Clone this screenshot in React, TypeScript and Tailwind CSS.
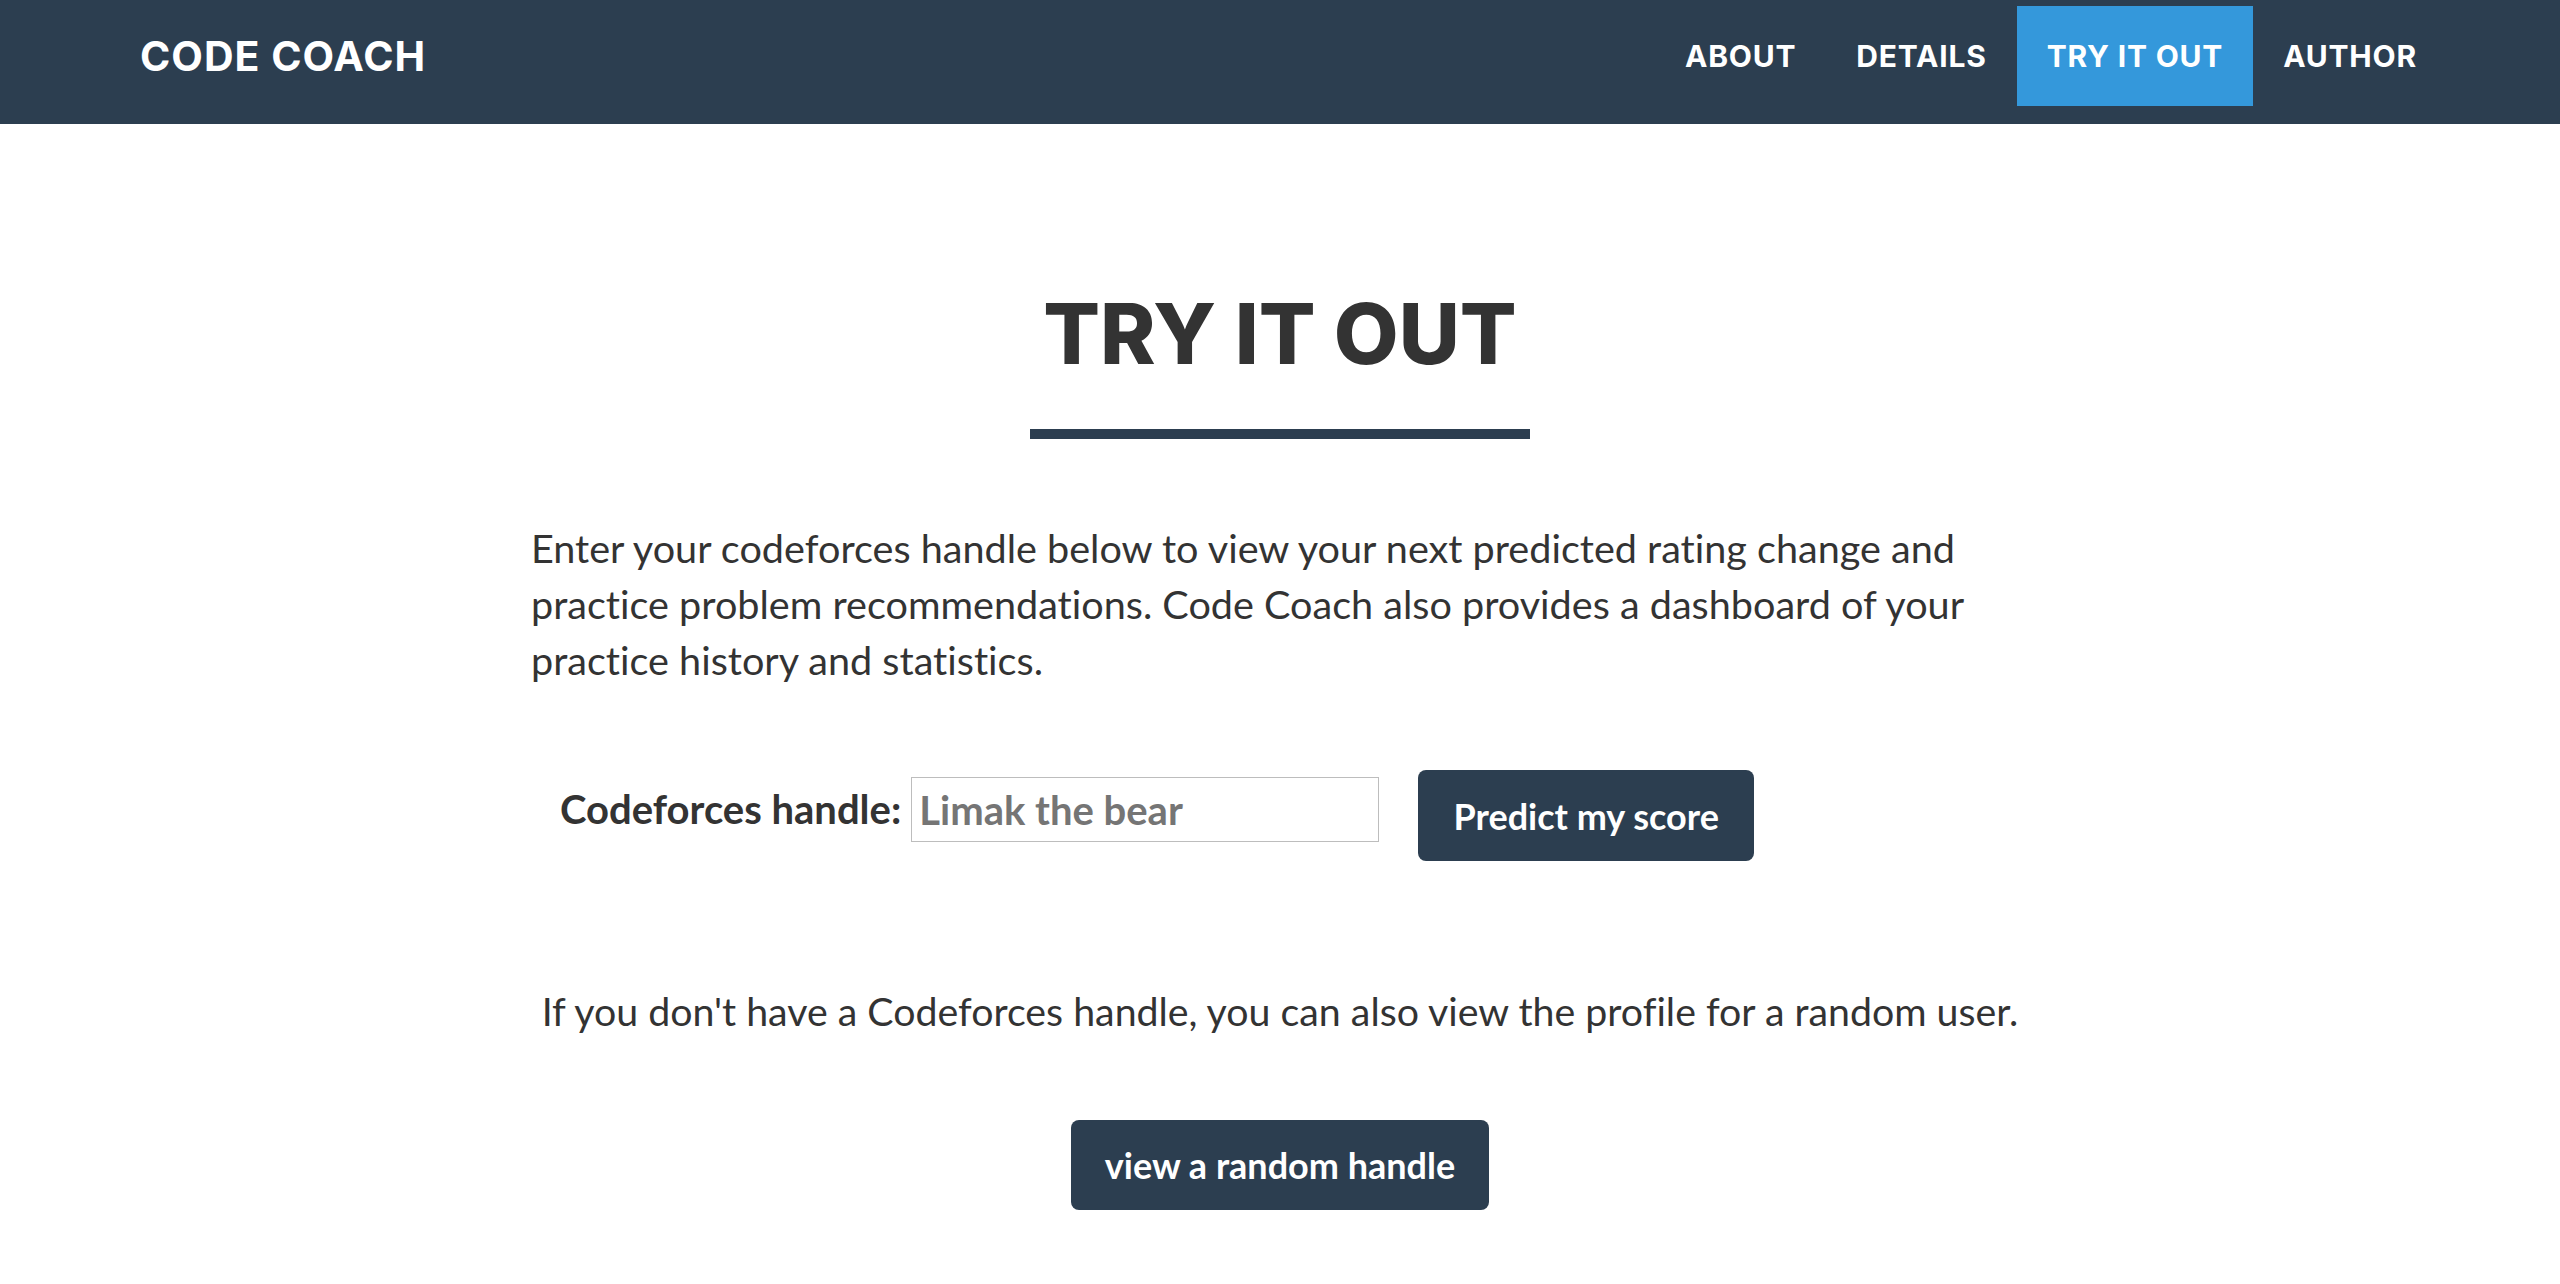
import { useState } from "react";

const navItems = ["About", "Details", "Try it out", "Author"];

function Navbar() {
  return (
    <nav className="h-[124px] w-full bg-[#2c3e50] pt-[6px]">
      <div className="flex h-[100px] items-center justify-between pl-[140px] pr-[113px]">
        <a className="font-['Inter',sans-serif] text-[41px] font-bold uppercase leading-none tracking-[1px] text-white">
          Code Coach
        </a>
        <ul className="flex h-full items-stretch">
          {navItems.map((item) => (
            <li
              key={item}
              className={
                item === "Try it out"
                  ? "flex items-center bg-[#3498db] px-[30px]"
                  : "flex items-center px-[30px]"
              }
            >
              <a className="font-['Inter',sans-serif] text-[30px] font-bold uppercase leading-none tracking-[0.8px] text-white">
                {item}
              </a>
            </li>
          ))}
        </ul>
      </div>
    </nav>
  );
}

export default function App() {
  const [handle, setHandle] = useState("");

  return (
    <div className="min-h-[1284px] w-full bg-white font-['Lato',sans-serif] text-[#333] [font-variant-ligatures:no-common-ligatures]">
      <Navbar />
      <section className="flex flex-col items-center">
        <h2 className="mt-[168px] font-['Inter',sans-serif] text-[84px] font-extrabold uppercase leading-none text-[#333]">
          Try it out
        </h2>
        <hr className="mt-[53px] h-[10px] w-[500px] border-0 bg-[#2c3e50]" />

        <div className="mt-[81px] w-[1498px]">
          <p className="text-[39.6px] leading-[56px]">
            Enter your codeforces handle below to view your next predicted rating change and
            practice problem recommendations. Code Coach also provides a dashboard of your
            practice history and statistics.
          </p>

          <form
            className="ml-[29px] mt-[82px] flex items-start"
            onSubmit={(e) => e.preventDefault()}
          >
            <label className="mt-[7px] text-[40px] font-bold leading-[65px]">Codeforces handle:</label>
            <input
              value={handle}
              onChange={(e) => setHandle(e.target.value)}
              placeholder="Limak the bear"
              className="ml-[10px] mt-[7px] h-[65px] w-[468px] border border-[#bdbdbd] px-[7px] text-[40px] font-bold text-[#333] placeholder:text-[#757575] outline-none"
            />
            <button
              type="submit"
              className="ml-[39px] h-[91px] w-[336px] rounded-[8px] bg-[#2c3e50] text-[36px] font-bold text-white"
            >
              Predict my score
            </button>
          </form>
        </div>

        <p className="mt-[122px] text-center text-[39.3px] leading-[56px]">
          If you don't have a Codeforces handle, you can also view the profile for a random user.
        </p>

        <button className="mt-[81px] h-[90px] w-[418px] rounded-[8px] bg-[#2c3e50] text-[36px] font-bold text-white">
          view a random handle
        </button>
      </section>
    </div>
  );
}
